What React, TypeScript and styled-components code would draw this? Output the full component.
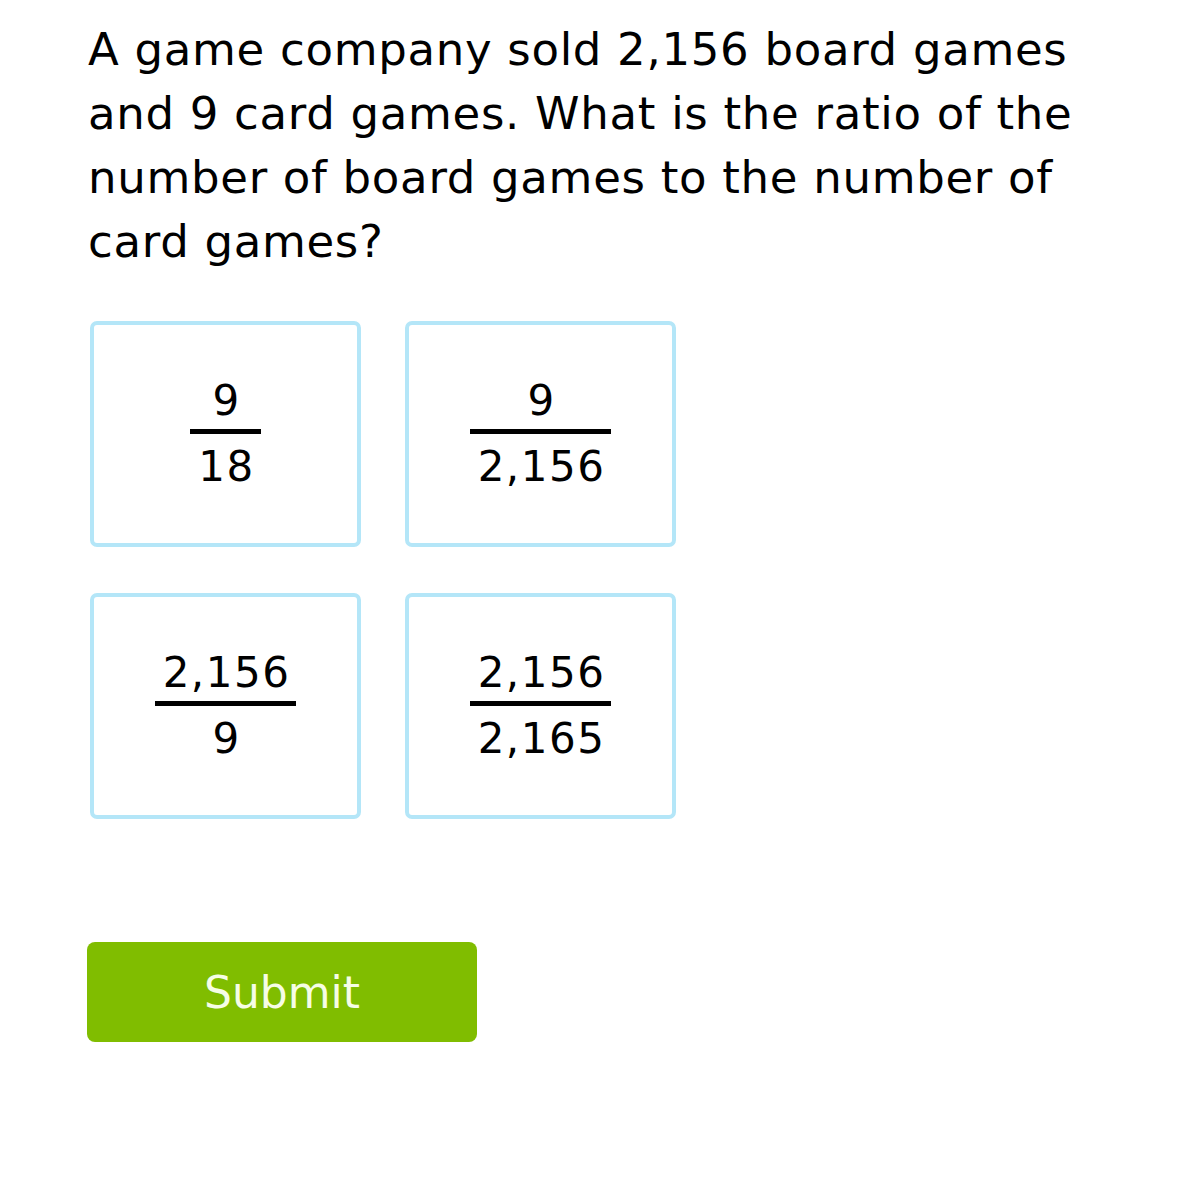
import React from "react";
import styled, { createGlobalStyle } from "styled-components";

const Global = createGlobalStyle`
  html, body { margin: 0; padding: 0; background: #ffffff; }
  body { font-family: "DejaVu Sans", Verdana, sans-serif; color: #000; }
`;

const Page = styled.div`
  padding: 18px 0 0 88px;
  width: 1111px;
`;

const Question = styled.p`
  margin: 0;
  font-size: 45px;
  line-height: 64px;
  letter-spacing: 0.7px;
  width: 1010px;
`;

const Choices = styled.div`
  display: grid;
  grid-template-columns: 271px 271px;
  grid-auto-rows: 226px;
  column-gap: 44px;
  row-gap: 46px;
  margin: 47px 0 0 2px;
`;

const Choice = styled.div`
  box-sizing: border-box;
  border: 4px solid #b4e6f8;
  border-radius: 7px;
  display: flex;
  align-items: center;
  justify-content: center;
  background: #fff;
`;

const Fraction = styled.div`
  display: inline-flex;
  flex-direction: column;
  align-items: stretch;
  font-size: 42px;
  line-height: 42px;
  letter-spacing: 1.5px;
  text-align: center;
`;

const Part = styled.span`
  display: block;
  padding: 0 6px 0 8px;
`;

const Bar = styled.span`
  display: block;
  height: 5px;
  background: #000;
  margin: 7px 0 12px;
`;

const Submit = styled.button`
  margin: 123px 0 0 -1px;
  width: 390px;
  height: 100px;
  border: none;
  border-radius: 8px;
  background: #80bd00;
  color: #f6fde6;
  font-family: "DejaVu Sans", Verdana, sans-serif;
  font-size: 44px;
  display: flex;
  align-items: center;
  justify-content: center;
  cursor: pointer;
`;

const choices: [string, string][] = [
  ["9", "18"],
  ["9", "2,156"],
  ["2,156", "9"],
  ["2,156", "2,165"],
];

export default function App() {
  return (
    <Page>
      <Global />
      <Question>
        A game company sold 2,156 board games and 9 card games. What is the ratio of the number of board games to the number of card games?
      </Question>
      <Choices>
        {choices.map(([n, d], i) => (
          <Choice key={i}>
            <Fraction>
              <Part>{n}</Part>
              <Bar />
              <Part>{d}</Part>
            </Fraction>
          </Choice>
        ))}
      </Choices>
      <Submit>Submit</Submit>
    </Page>
  );
}
